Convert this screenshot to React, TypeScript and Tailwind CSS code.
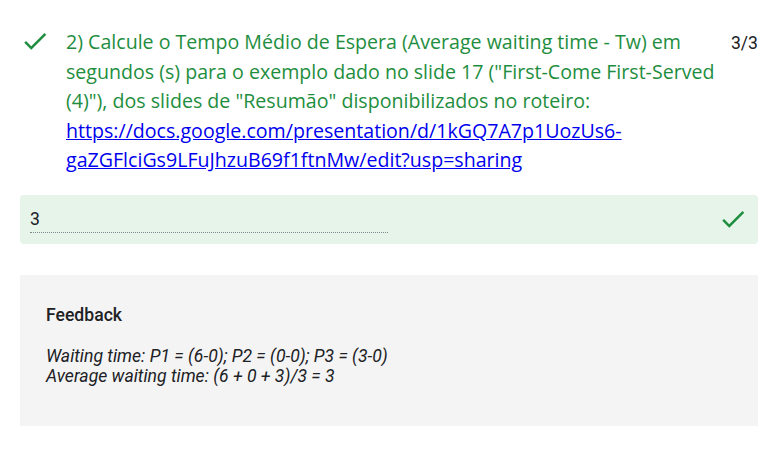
import React from 'react';

const Check = ({ className }: { className?: string }) => (
  <svg viewBox="0 0 24 24" className={className} fill="currentColor">
    <path d="M9 16.17L4.83 12l-1.42 1.41L9 19 21 7l-1.41-1.41z" />
  </svg>
);

export default function App() {
  return (
    <div className="w-[781px] h-[452px] bg-white pl-5 pr-[23px] pt-[26px] font-['Roboto',sans-serif]">
      {/* Question */}
      <div className="flex items-start">
        <Check className="w-[30px] h-[30px] shrink-0 text-[#1e8e3e]" />
        <p className="ml-4 flex-1 pt-px text-[19.6px] leading-[29.5px] text-[#1e8e3e] font-['Open_Sans',sans-serif]">
          2) Calcule o Tempo Médio de Espera (Average waiting time - Tw) em segundos (s) para o exemplo dado no slide 17 ("First-Come First-Served (4)"), dos slides de "Resumão" disponibilizados no roteiro:{' '}
          <a href="#" className="text-[#0000ee] underline">
            https://docs.google.com/presentation/d/1kGQ7A7p1UozUs6-gaZGFlciGs9LFuJhzuB69f1ftnMw/edit?usp=sharing
          </a>
        </p>
        <span className="ml-2 pt-[4px] text-[17.6px] text-[#202124]">3/3</span>
      </div>

      {/* Answer */}
      <div className="mt-[20px] h-[49px] rounded bg-[#e6f4ea] flex items-center pl-[10px] pr-[10px]">
        <div className="w-[358px] border-b border-dotted border-[#80868b] pt-[2px] pb-[2px] text-[17.6px] leading-[22px] text-[#202124]">
          3
        </div>
        <div className="flex-1" />
        <Check className="w-[30px] h-[30px] text-[#1e8e3e]" />
      </div>

      {/* Feedback */}
      <div className="mt-[31px] h-[151px] bg-[#f4f4f4] px-[26px] pt-[29px]">
        <div className="text-[17.6px] font-medium text-[#202124] leading-[22px]">Feedback</div>
        <div className="mt-[20px] text-[17.6px] italic text-[#202124] leading-[20px]">
          <div>Waiting time: P1 = (6-0); P2 = (0-0); P3 = (3-0)</div>
          <div>Average waiting time: (6 + 0 + 3)/3 = 3</div>
        </div>
      </div>
    </div>
  );
}
